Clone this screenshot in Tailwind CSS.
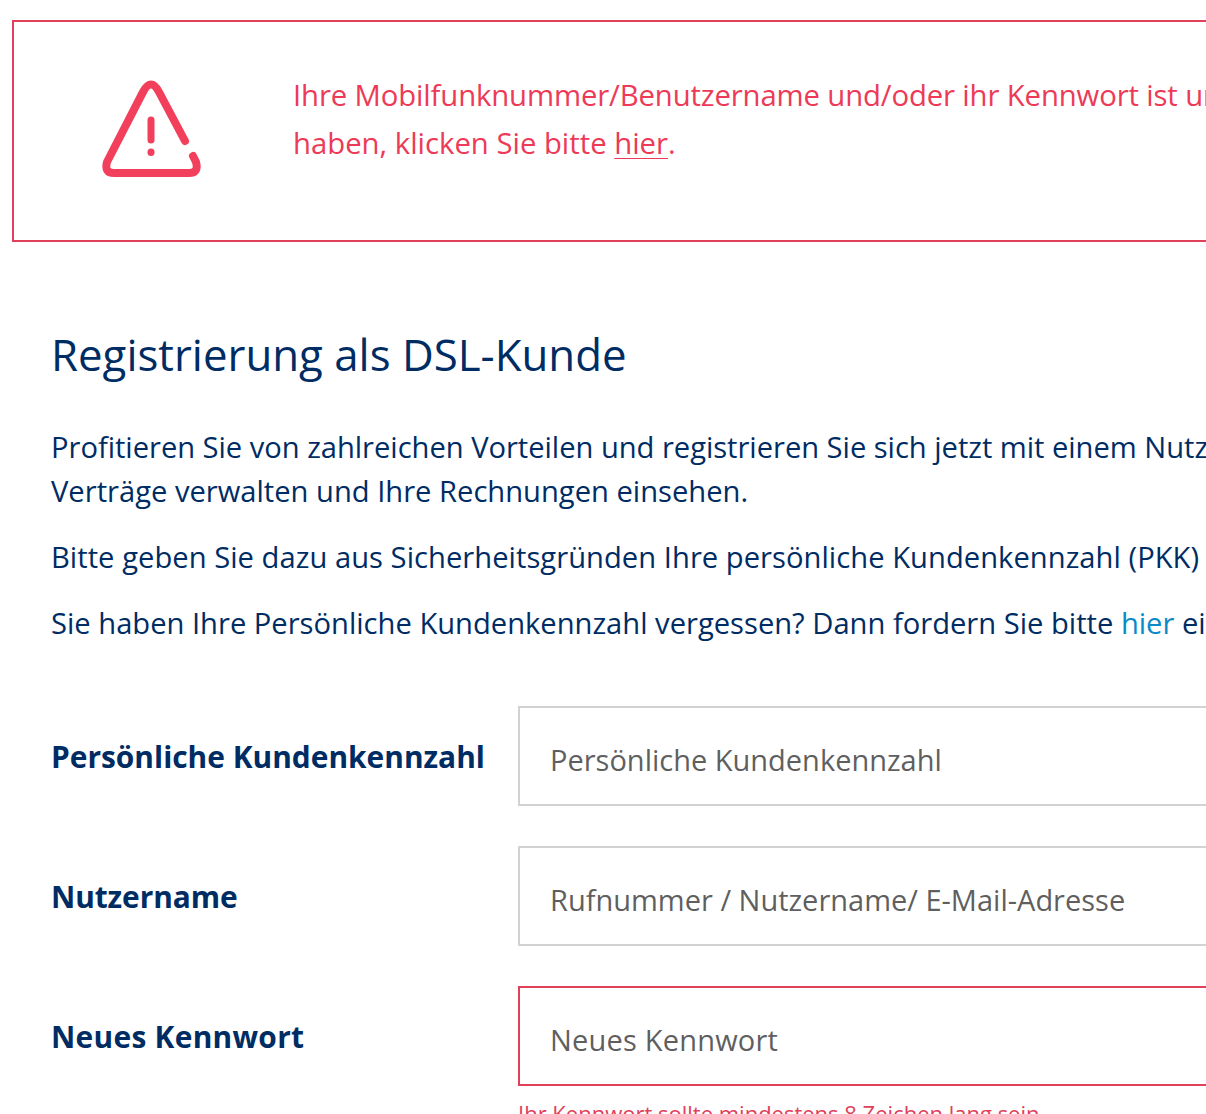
<!DOCTYPE html>
<html lang="de">
<head>
    <meta charset="UTF-8">
    <title>Registrierung als DSL-Kunde</title>
    <script src="https://cdn.jsdelivr.net/npm/@tailwindcss/browser@4"></script>
</head>
<body class="h-[1114px] overflow-hidden bg-white font-['Open_Sans',sans-serif]">
    <main class="w-[1600px] pl-[12px] pt-[20px]">
        <!-- Fehlermeldung -->
        <div class="flex h-[222px] items-start border-2 border-[#e0405a] pl-[88px] pt-[49px]">
            <svg class="mt-[7px] h-[100px] w-[102px] shrink-0" viewBox="0 0 102 100" fill="none" stroke="#f23f5c" stroke-width="8" stroke-linecap="round" stroke-linejoin="round">
                <path d="M83 63 L57 14 Q49 -1 41 14 L5 84 Q2 95 12 95 L87 95 Q97 95 94 84 L91 78"/>
                <path d="M49 42 L49 62" stroke-width="7"/>
                <path d="M49 74 L49 74.5" stroke-width="7"/>
            </svg>
            <div class="ml-[89px] whitespace-nowrap text-[29.3px] leading-[48px] text-[#ec3a57]">
                <p class="tracking-[-0.13px]">Ihre Mobilfunknummer/Benutzername und/oder ihr Kennwort ist ungültig. Falls Sie Ihr Kennwort vergessen</p>
                <p>haben, klicken Sie bitte <span class="underline decoration-1 underline-offset-4">hier</span>.</p>
            </div>
        </div>

        <div class="pl-[39px] text-[#002c64]">
            <h1 class="mt-[78px] text-[43.8px] leading-[68px]">Registrierung als DSL-Kunde</h1>
            <div class="mt-[37px] whitespace-nowrap text-[29.15px] leading-[44px]">
                <p class="tracking-[-0.03px]">Profitieren Sie von zahlreichen Vorteilen und registrieren Sie sich jetzt mit einem Nutzernamen, mit dem Sie</p>
                <p>Verträge verwalten und Ihre Rechnungen einsehen.</p>
                <p class="mt-[22px] tracking-[0.04px]">Bitte geben Sie dazu aus Sicherheitsgründen Ihre persönliche Kundenkennzahl (PKK) ein.</p>
                <p class="mt-[22px]">Sie haben Ihre Persönliche Kundenkennzahl vergessen? Dann fordern Sie bitte <span class="text-[#0a8ac6]">hier</span> eine neue an.</p>
            </div>

            <!-- Formular -->
            <div class="mt-[61px] flex flex-col gap-[40px]">
                <div class="flex items-center">
                    <label class="w-[467px] pt-[2px] text-[29.9px] font-bold">Persönliche Kundenkennzahl</label>
                    <div class="flex h-[100px] w-[900px] items-center border-2 border-[#d2d2d2] pl-[30px] pt-[8px] text-[29px] text-[#5f5f5f]">Persönliche Kundenkennzahl</div>
                </div>
                <div class="flex items-center">
                    <label class="w-[467px] pt-[2px] text-[29.9px] tracking-[-0.1px] font-bold">Nutzername</label>
                    <div class="flex h-[100px] w-[900px] items-center border-2 border-[#d2d2d2] pl-[30px] pt-[8px] text-[29px] text-[#5f5f5f]">Rufnummer / Nutzername/ E-Mail-Adresse</div>
                </div>
                <div class="flex items-center">
                    <label class="w-[467px] pt-[2px] text-[29.9px] tracking-[0.28px] font-bold">Neues Kennwort</label>
                    <div class="flex h-[100px] w-[900px] items-center border-2 border-[#e0405a] pl-[30px] pt-[8px] text-[29px] tracking-[0.2px] text-[#5f5f5f]">Neues Kennwort</div>
                </div>
                <p class="-mt-[29px] ml-[467px] text-[22px] leading-[32px] text-[#e0405a]">Ihr Kennwort sollte mindestens 8 Zeichen lang sein.</p>
            </div>
        </div>
    </main>
</body>
</html>
